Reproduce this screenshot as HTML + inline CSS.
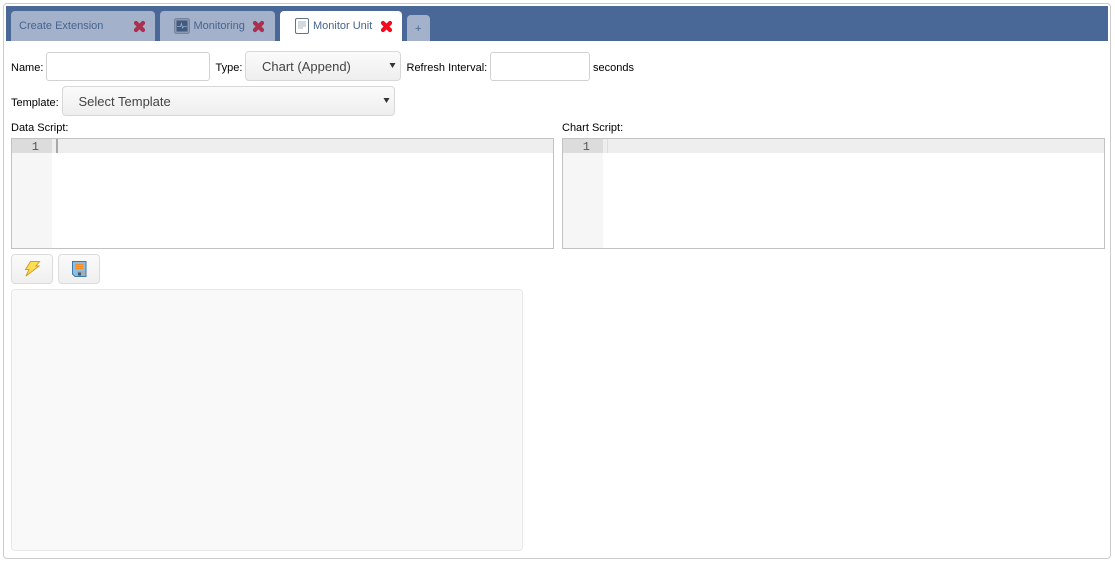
<!DOCTYPE html>
<html><head><meta charset="utf-8"><style>
html,body{margin:0;padding:0;width:1115px;height:563px;overflow:hidden;background:#fff;font-family:"Liberation Sans",sans-serif;font-size:11px;color:#000}
div,span,svg{position:absolute;box-sizing:border-box}
.t{white-space:nowrap;line-height:14px}
.tab{top:11px;height:30px;border-radius:4px 4px 0 0;background:#a3b1ca}
.tt{top:19px;font-size:11px;color:#47648f}
.inp{background:#fff;border:1px solid #d2d2d2;border-radius:3px}
.sel{background:linear-gradient(#fbfbfb,#eeeeee);border:1px solid #d8d8d8;border-radius:4px;color:#444;font-size:13px}
.ed{border:1px solid #c2c2c2;background:#fff;top:138px;height:111px;width:543px;overflow:hidden}
.gut{left:0;top:0;width:40px;height:109px;background:#f6f6f6}
.al{left:0;top:0;width:541px;height:14px;background:#eee}
.ag{left:0;top:0;width:40px;height:14px;background:#dcdcdc}
.n{left:0;top:1px;width:27px;text-align:right;font-family:"Liberation Mono",monospace;font-size:12px;line-height:14px;color:#555}
.btn{top:254px;height:30px;width:42px;background:linear-gradient(#fbfbfb,#efefef);border:1px solid #dcdcdc;border-radius:4px}
</style></head><body>
<div style="left:3px;top:3px;width:1108px;height:556px;border:1px solid #ccc;border-radius:4px"></div>
<div style="left:6px;top:6px;width:1102px;height:35px;background:#4a6897"></div>

<div class="tab" style="left:11px;width:144px"></div>
<div class="t tt" style="left:19px">Create Extension</div>
<svg style="left:133px;top:20px" width="13" height="13" viewBox="0 0 13 13"><path d="M3 3L10 10M10 3L3 10" stroke="#ab2f4f" stroke-width="4.200" stroke-linecap="round"/></svg>

<div class="tab" style="left:160px;width:115px"></div>
<svg style="left:174px;top:18px" width="16" height="16" viewBox="0 0 16 16"><rect x=".5" y=".5" width="15" height="15" rx="2" fill="#8b99b2" stroke="#75849e"/><rect x="2.500" y="2.500" width="11" height="11" fill="#425a7d"/><path d="M3 8.500H6.500L7.500 5.500L8.500 10L9.500 8.500H13" stroke="#8fb0d0" fill="none" stroke-width=".8"/></svg>
<div class="t tt" style="left:193.500px">Monitoring</div>
<svg style="left:252px;top:20px" width="13" height="13" viewBox="0 0 13 13"><path d="M3 3L10 10M10 3L3 10" stroke="#ab2f4f" stroke-width="4.200" stroke-linecap="round"/></svg>

<div class="tab" style="left:280px;width:122px;background:#fff"></div>
<svg style="left:295px;top:18px" width="14" height="16" viewBox="0 0 14 16"><rect x=".5" y=".5" width="13" height="15" rx="1.500" fill="#fff" stroke="#5d7488"/><path d="M3 4H11M3 6H11M3 8H11M3 10H8" stroke="#a9b4be" stroke-width="1"/></svg>
<div class="t tt" style="left:313px">Monitor Unit</div>
<svg style="left:380px;top:20px" width="13" height="13" viewBox="0 0 13 13"><path d="M3 3L10 10M10 3L3 10" stroke="#f50a1e" stroke-width="4.200" stroke-linecap="round"/></svg>

<div class="tab" style="left:407px;top:15px;width:23px;height:26px"></div>
<div class="t" style="left:415px;top:22px;font-size:11px;color:#47648f">+</div>

<div class="t" style="left:11px;top:61px">Name:</div>
<div class="inp" style="left:46px;top:52px;width:164px;height:29px"></div>
<div class="t" style="left:215.500px;top:61px">Type:</div>
<div class="sel" style="left:245px;top:51px;width:156px;height:30px"></div>
<div class="t" style="left:262px;top:60px;font-size:13px;color:#444">Chart (Append)</div>
<svg style="left:389px;top:63px" width="7" height="5" viewBox="0 0 7 5"><path d="M.5 0H6.500L3.500 5Z" fill="#333"/></svg>
<div class="t" style="left:406.500px;top:61px">Refresh Interval:</div>
<div class="inp" style="left:490px;top:52px;width:100px;height:29px"></div>
<div class="t" style="left:593px;top:61px">seconds</div>

<div class="t" style="left:11px;top:96px">Template:</div>
<div class="sel" style="left:62px;top:86px;width:333px;height:30px"></div>
<div class="t" style="left:78.500px;top:95px;font-size:13px;color:#444">Select Template</div>
<svg style="left:383px;top:98px" width="7" height="5" viewBox="0 0 7 5"><path d="M.5 0H6.500L3.500 5Z" fill="#333"/></svg>

<div class="t" style="left:11px;top:121px">Data Script:</div>
<div class="ed" style="left:11px"><div class="gut"></div><div class="al"></div><div class="ag"></div><div class="n">1</div><div style="left:44px;top:0;width:2px;height:14px;background:#a8a8a8"></div></div>
<div class="t" style="left:562px;top:121px">Chart Script:</div>
<div class="ed" style="left:562px"><div class="gut"></div><div class="al"></div><div class="ag"></div><div class="n">1</div><div style="left:44px;top:0;width:1px;height:14px;background:#dedede"></div></div>

<div class="btn" style="left:11px"></div>
<svg style="left:24px;top:260px" width="17" height="17" viewBox="0 0 17 17"><path d="M6.500 1.500H15.500L12 6H15L2 16L5 9.500H1.500Z" fill="#fbdf55" stroke="#d89b2b" stroke-width="1"/></svg>
<div class="btn" style="left:58px"></div>
<svg style="left:72px;top:261px" width="15" height="16" viewBox="0 0 15 16"><path d="M.5 .5H14V15.500H3L.5 13Z" fill="#8fbde2" stroke="#3c7ba6"/><path d="M3 3.500H11.500M3 5.500H11.500M3 7.500H11.500" stroke="#f58a1f" stroke-width="1"/><rect x="5" y="10" width="8" height="5" fill="#a2adb5"/><rect x="6" y="11.500" width="3" height="3" fill="#3f5a72"/></svg>

<div style="left:11px;top:289px;width:512px;height:262px;background:#f9f9f9;border:1px solid #e8e8e8;border-radius:4px"></div>
</body></html>
